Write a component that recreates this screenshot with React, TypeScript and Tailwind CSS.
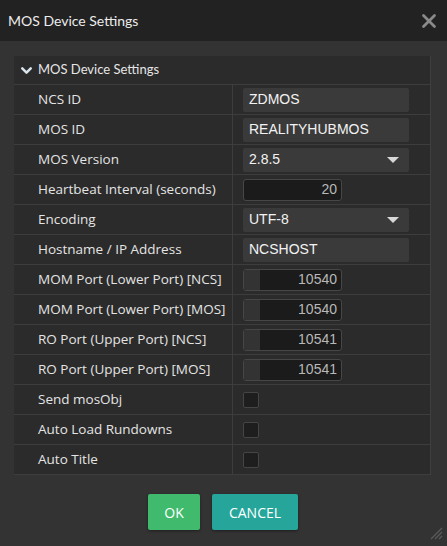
import { ChevronDown, X } from "lucide-react";

type Field =
  | { label: string; kind: "text"; value: string }
  | { label: string; kind: "select"; value: string }
  | { label: string; kind: "number"; value: string }
  | { label: string; kind: "check" };

const fields: Field[] = [
  { label: "NCS ID", kind: "text", value: "ZDMOS" },
  { label: "MOS ID", kind: "text", value: "REALITYHUBMOS" },
  { label: "MOS Version", kind: "select", value: "2.8.5" },
  { label: "Heartbeat Interval (seconds)", kind: "number", value: "20" },
  { label: "Encoding", kind: "select", value: "UTF-8" },
  { label: "Hostname / IP Address", kind: "text", value: "NCSHOST" },
  { label: "MOM Port (Lower Port) [NCS]", kind: "number", value: "10540" },
  { label: "MOM Port (Lower Port) [MOS]", kind: "number", value: "10540" },
  { label: "RO Port (Upper Port) [NCS]", kind: "number", value: "10541" },
  { label: "RO Port (Upper Port) [MOS]", kind: "number", value: "10541" },
  { label: "Send mosObj", kind: "check" },
  { label: "Auto Load Rundowns", kind: "check" },
  { label: "Auto Title", kind: "check" },
];

function Control({ f }: { f: Field }) {
  if (f.kind === "text") {
    return (
      <div className="w-[166px] h-[24px] bg-[#3a3a3a] rounded-[2px] px-[6px] flex items-center text-[14px] text-[#f2f2f2] font-['Liberation_Sans',sans-serif]">
        {f.value}
      </div>
    );
  }
  if (f.kind === "select") {
    return (
      <div className="w-[166px] h-[24px] bg-[#3a3a3a] rounded-[2px] pl-[6px] pr-[10px] flex items-center justify-between text-[14px] text-[#f2f2f2] font-['Liberation_Sans',sans-serif]">
        <span>{f.value}</span>
        <span className="w-0 h-0 border-l-[6px] border-r-[6px] border-t-[6px] border-l-transparent border-r-transparent border-t-[#d8d8d8]" />
      </div>
    );
  }
  if (f.kind === "number") {
    // port fields carry a drag handle on the left
    const slider = f.value !== "20";
    return (
      <div className="w-[99px] h-[22px] bg-[#1b1b1b] border border-[#474747] rounded-[3px] flex overflow-hidden text-[14px] text-[#b8b8b8] font-['Liberation_Sans',sans-serif]">
        {slider && <div className="w-[16px] bg-[#333333]" />}
        <div className="flex-1 flex items-center justify-end pr-[4px]">{f.value}</div>
      </div>
    );
  }
  return <div className="w-[16px] h-[16px] bg-[#1e1e1e] border border-[#454545] rounded-[2px]" />;
}

export default function App() {
  return (
    <div className="w-[447px] h-[546px] bg-[#333333] flex flex-col font-['Lato','Open_Sans',sans-serif] relative">
      <div className="h-[41px] bg-[#222222] flex items-center justify-between pl-[8px] pr-[7px] shrink-0">
        <span className="text-[14px] text-[#ececec]">MOS Device Settings</span>
        <X size={22} strokeWidth={3} className="text-[#8a8a8a]" />
      </div>

      <div className="mt-[15px] ml-[14px] w-[417px] bg-[#2b2b2b] border-r border-[#3f3f3f]">
        <div className="h-[29px] flex items-center pl-[4px] border-b border-[#3d3d3d] text-[13px] text-[#e6e6e6]">
          <ChevronDown size={17} strokeWidth={3.5} className="text-[#d8e4ee] mr-[3px]" />
          MOS Device Settings
        </div>
        {fields.map((f) => (
          <div key={f.label} className="h-[30px] grid grid-cols-[219px_1fr] border-b border-[#3d3d3d]">
            <div className="flex items-center pl-[24px] text-[13.5px] text-[#e4e4e4] border-r border-[#3d3d3d] font-['Open_Sans',sans-serif] whitespace-nowrap">
              {f.label}
            </div>
            <div className="flex items-center pl-[10px]">
              <Control f={f} />
            </div>
          </div>
        ))}
      </div>

      <div className="flex justify-center gap-[12px] mt-[19px] pr-[1px]">
        <button className="w-[52px] h-[36px] bg-[#40bb6e] rounded-[2px] text-[14px] text-white shadow-[0_1px_3px_rgba(0,0,0,0.4)] font-['Open_Sans',sans-serif]">
          OK
        </button>
        <button className="w-[86px] h-[36px] bg-[#26a69b] rounded-[2px] text-[14px] text-white shadow-[0_1px_3px_rgba(0,0,0,0.4)] font-['Open_Sans',sans-serif]">
          CANCEL
        </button>
      </div>

      <svg className="absolute right-[4px] bottom-[6px]" width="14" height="14" viewBox="0 0 14 14">
        <line x1="13" y1="2" x2="2" y2="13" stroke="#5a5a5a" strokeWidth="1.2" />
        <line x1="13" y1="6" x2="6" y2="13" stroke="#5a5a5a" strokeWidth="1.2" />
        <line x1="13" y1="10" x2="10" y2="13" stroke="#5a5a5a" strokeWidth="1.2" />
      </svg>
    </div>
  );
}
